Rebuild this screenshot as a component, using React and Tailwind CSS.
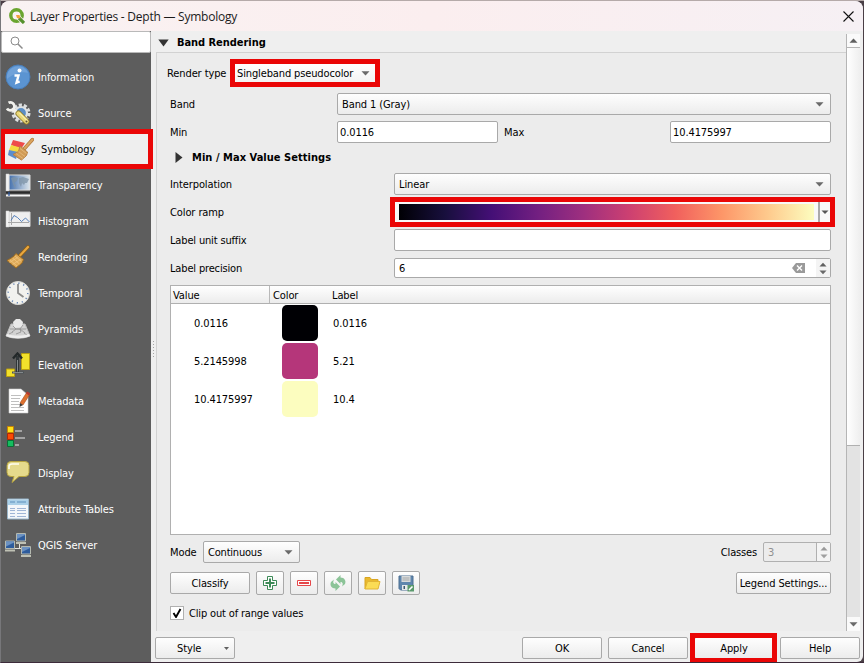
import React from 'react';

const Down = ({ className = '' }) => (
  <svg className={'shrink-0 ' + className} width="9" height="5" viewBox="0 0 9 5"><path d="M.5 0.300h8L4.500 4.500z" fill="#6a6a6a" /></svg>
);
const Up = ({ className = '' }) => (
  <svg className={'shrink-0 ' + className} width="9" height="5" viewBox="0 0 9 5"><path d="M.5 4.700h8L4.500 0.500z" fill="#606060" /></svg>
);

const field = 'flex items-center rounded-[2px] border border-[#a9a9a9] bg-white ';
const button = 'flex items-center rounded-[2px] border border-[#a9a9a9] bg-linear-to-b from-[#fefefe] to-[#ececec] ';

function Icon({ name }) {
  const p = { className: 'h-[26px] w-[26px] shrink-0', viewBox: '0 0 26 26', fill: 'none' };
  switch (name) {
    case 'info':
      return (
        <svg {...p}>
          <circle cx="13" cy="13" r="12" fill="#5b94d2" stroke="#4a7fba" />
          <path d="M2 15a11 11 0 0 1 21-6C17 7 8 10 2 15z" fill="#7facde" opacity=".6" />
          <circle cx="14.5" cy="6.5" r="2" fill="#fff" />
          <path d="M9.5 11.500h4l-2 7.200 3.200-1.200" stroke="#fff" strokeWidth="2.400" />
        </svg>
      );
    case 'source':
      return (
        <svg {...p}>
          <circle cx="16" cy="13" r="8" stroke="#dcdfe0" strokeWidth="3" strokeDasharray="3.200 1.827" />
          <circle cx="16" cy="13" r="6" fill="#5c8ec4" stroke="#dfe2e3" strokeWidth="2.200" />
          <path d="M3.500 2.800A4 4 0 1 1 2 8.500" stroke="#f1f1ed" strokeWidth="2.800" />
          <path d="M8 9l5 5" stroke="#f1f1ed" strokeWidth="3.400" />
          <path d="M13.500 13.500l8 8" stroke="#917c28" strokeWidth="6" strokeLinecap="round" />
          <path d="M13.500 13.500l8 8" stroke="#e9d877" strokeWidth="4.400" strokeLinecap="round" />
          <path d="M14.500 13l8 8" stroke="#f9f0a8" strokeWidth="1.200" />
          <circle cx="21.500" cy="21.500" r="1" fill="#5f5433" />
        </svg>
      );
    case 'symbology':
      return (
        <svg {...p}>
          <path d="M5 4l12 3-4 6L3 9z" fill="#ee4a4a" />
          <path d="M3 9l11 3-4 6L1 14z" fill="#f4d93f" />
          <path d="M1 14l9 2-2 7L0 19z" fill="#5c8ecb" />
          <path d="M24.500 3.500l-8 9" stroke="#b0783a" strokeWidth="3.400" strokeLinecap="round" />
          <path d="M24.500 3.500l-8 9" stroke="#dba560" strokeWidth="2" strokeLinecap="round" />
          <path d="M12 10l7.500 6-1 3.500-5 4.500L5 18.500l5.500-3z" fill="#d19b55" stroke="#b78142" />
          <path d="M8 17.500l7 5M10.500 15.500l6.500 5M12 12.500l6.500 5" stroke="#e6bb80" strokeWidth=".8" />
        </svg>
      );
    case 'transparency':
      return (
        <svg {...p}>
          <defs><linearGradient id="sky"><stop stopColor="#4470ad" /><stop offset="1" stopColor="#dce5eb" /></linearGradient></defs>
          <path d="M4 3h21v15H4z" fill="url(#sky)" stroke="#dcdcdc" />
          <path d="M1 2h3v17H1z" fill="#f3f3f3" stroke="#ccc" strokeWidth=".5" />
          <path d="M6 6l3-1 4 1-1 3-3 2 2 2-1 3-2-4zM14 6l4-1 6 2-2 4-2 0-1 2-2-2-1 4-2-4z" fill="#7d93a5" opacity=".75" />
          <path d="M1 19.500h24v2H1z" fill="#2b2b2b" />
          <path d="M1 22.500h24v2H1z" fill="#f4f4f4" />
          <path d="M4 20v4" stroke="#2855a0" strokeWidth="1.200" />
        </svg>
      );
    case 'histogram':
      return (
        <svg {...p}>
          <path d="M4 4h21v14.500H4z" fill="#efefef" stroke="#dcdcdc" />
          <path d="M1 3h3v16H1z" fill="#f3f3f3" stroke="#ccc" strokeWidth=".5" />
          <path d="M6.500 5v12M3 14.500h21" stroke="#a8a8a8" />
          <path d="M6 12.500l3-5 3.500 2 4 4 4-3.500 4 4" stroke="#4776b5" strokeWidth=".9" />
        </svg>
      );
    case 'rendering':
      return (
        <svg {...p}>
          <path d="M23 3l-8 8.500" stroke="#8f5e14" strokeWidth="3.600" strokeLinecap="round" />
          <path d="M23 3l-8 8.500" stroke="#e9a73f" strokeWidth="2.200" strokeLinecap="round" />
          <path d="M11 9.500l7.500 6-1.500 3.500-6 5L2 16.500l6-3.500z" fill="#dea958" stroke="#a06d20" />
          <path d="M5 16l7 6M7.500 14l7 6M10 12l6 5M4.500 18.500l8-5M7.500 20.500l8-5" stroke="#f2c984" strokeWidth=".7" />
        </svg>
      );
    case 'temporal':
      return (
        <svg {...p}>
          <circle cx="13" cy="13" r="11.500" fill="#f2f2ee" stroke="#dadad6" />
          <circle cx="13" cy="13" r="9.800" stroke="#5f7fb0" strokeWidth="1.400" strokeDasharray="1.200 3.932" />
          <path d="M13 4v9l5.500 4" stroke="#8c8c8a" strokeWidth="1.800" />
        </svg>
      );
    case 'pyramids':
      return (
        <svg {...p}>
          <path d="M6 8h14l5 12c-7 3-17 3-24 0z" fill="#d2d2d2" stroke="#bdbdbd" />
          <path d="M8 6l3-3h4l3 3-1 5-8 1z" fill="#e9e9e9" />
          <path d="M5 13h16M8 10l3 3-4 3M18 9l-3 4 5 4M11 13h4l1 3-5 2M4 18l4-2M22 19l-3-2" stroke="#8f8f8f" strokeWidth=".8" />
          <path d="M1 20c7 3 17 3 24 0l-1-2c-7 2-15 2-22 0z" fill="#eee" />
        </svg>
      );
    case 'elevation':
      return (
        <svg {...p}>
          <path d="M16.500 1.500h8v16h-8zM1.500 17h8v7.500h-8z" fill="#f2e02b" stroke="#b99e10" />
          <path d="M7 20.500h12" stroke="#4c5356" strokeWidth="2" />
          <path d="M12.500 20V4" stroke="#303638" strokeWidth="3" />
          <path d="M12.500 8v11.500M8 20.500h10" stroke="#83898b" strokeWidth="1" />
          <path d="M8 6.500l4.500-5 4.500 5" stroke="#232829" strokeWidth="2.400" />
        </svg>
      );
    case 'metadata':
      return (
        <svg {...p}>
          <path d="M4 1h12l7 6v18H4z" fill="#fff" stroke="#ccc" strokeWidth=".6" />
          <path d="M6 7.500h10M6 10.500h9M6 13.500h8M6 16.500h9M6 19.500h13M6 22.500h13" stroke="#bfbfbf" />
          <path d="M22 4l3 2-7 11-3-2z" fill="#df712f" stroke="#a74b1b" strokeWidth=".6" />
          <path d="M22 3.500l3.500 2-1.500 2-3-2z" fill="#b33a32" /><path d="M15 15l3 2-3.500 2z" fill="#3f3a36" />
        </svg>
      );
    case 'legend':
      return (
        <svg {...p}>
          <path d="M2.500 2.500h6v6h-6z" fill="#ffe11a" stroke="#c78305" />
          <path d="M2.500 9.500h6v6h-6z" fill="#fb4a05" stroke="#ae2907" />
          <path d="M2.500 16.500h6v6h-6z" fill="#15bd5f" stroke="#0a6f35" />
          <path d="M10 7h7M10 14h10M10 21h4" stroke="#a3a3a3" strokeWidth="2" />
        </svg>
      );
    case 'display':
      return (
        <svg {...p}>
          <path d="M6 1.500h14q4 0 4 4v7q0 4-4 4h-6L7 22.500l2-6H6q-4 0-4-4v-7q0-4 4-4z" fill="#e5da8c" stroke="#b6a440" />
          <path d="M4 9V6.500Q4 4 7 4h7" stroke="#fffef0" strokeWidth="1.600" />
        </svg>
      );
    case 'table':
      return (
        <svg {...p}>
          <path d="M2.500 3h21v20h-21z" fill="#f3f7fa" stroke="#98b4c8" />
          <path d="M3 3.500h20V9H3z" fill="#aad0e8" />
          <path d="M5 6h5M12 6h9" stroke="#5d8fbb" strokeWidth="1.200" />
          <path d="M5 12.500h5M5 14.500h5M5 17.500h5M5 20.500h5M12 12.500h9M12 14.500h9M12 17.500h9M12 20.500h9" stroke="#9fb6d6" strokeWidth="1" />
        </svg>
      );
    default:
      return (
        <svg {...p}>
          <path d="M14.500 11v6M9 16.500h10" stroke="#e5e5df" />
          {[[11, 1], [0, 8.500], [16, 14]].map(([x, y]) => (
            <g key={x} transform={`translate(${x} ${y})`}>
              <path d="M.5.500h9v7.500h-9z" fill="#2e5c9c" stroke="#b4b9b0" />
              <path d="M1 6l8-4V1H1z" fill="#6c92c2" />
              <path d="M0 9h10v2H0z" fill="#bfc1b4" />
            </g>
          ))}
        </svg>
      );
  }
}

const NAV = [
  ['info', 'Information'], ['source', 'Source'], ['symbology', 'Symbology'], ['transparency', 'Transparency'],
  ['histogram', 'Histogram'], ['rendering', 'Rendering'], ['temporal', 'Temporal'], ['pyramids', 'Pyramids'],
  ['elevation', 'Elevation'], ['metadata', 'Metadata'], ['legend', 'Legend'], ['display', 'Display'],
  ['table', 'Attribute Tables'], ['server', 'QGIS Server'],
];

function Sidebar() {
  return (
    <div className="flex w-[150px] shrink-0 flex-col bg-[#5d5d5d]">
      <div className="flex h-[22px] shrink-0 items-center rounded-[2px] border border-[#b9b9b9] bg-white pl-2">
        <svg width="13" height="13" viewBox="0 0 13 13" fill="none" stroke="#8b8b8b"><circle cx="5" cy="5" r="4" /><path d="M8 8l4.500 4.500" strokeWidth="1.500" /></svg>
      </div>
      <div className="flex flex-col pt-[6px]">
        {NAV.map(([icon, label]) =>
          icon === 'symbology' ? (
            <div key={icon} className="relative flex h-9 items-center bg-[#eeeeee] pl-[7px]">
              <Icon name={icon} />
              <span className="ml-[7px] text-black">{label}</span>
              <div className="absolute -top-[2px] -left-[1px] h-[40px] w-[153px] border-5 border-[#ea0606]" />
            </div>
          ) : (
            <div key={icon} className="flex h-9 items-center pl-[4px]">
              <Icon name={icon} />
              <span className="ml-[7px] text-white">{label}</span>
            </div>
          )
        )}
      </div>
    </div>
  );
}

const ROWS = [
  ['0.0116', 'bg-[#000004]', '0.0116'],
  ['5.2145998', 'bg-[#b5367a]', '5.21'],
  ['10.4175997', 'bg-[#fcfdbf]', '10.4'],
];

function ColorTable() {
  return (
    <div className="mt-[7px] h-[250px] w-[661px] border border-[#b0b0b0] bg-white">
      <div className="flex h-[18px] items-center border-b border-[#b0b0b0] bg-linear-to-b from-white to-[#ececec]">
        <div className="flex h-full w-[99px] items-center border-r border-[#b9b9b9] pl-[2px]"><span>Value</span></div>
        <div className="flex h-full w-[59px] items-center pl-[3px]"><span>Color</span></div>
        <div className="flex pl-[3px]"><span>Label</span></div>
      </div>
      {ROWS.map(([v, c, l]) => (
        <div key={v} className="flex h-[38px] items-center">
          <div className="flex w-[111px] pl-[23px]"><span>{v}</span></div>
          <div className={'h-9 w-9 rounded-[5px] ' + c} />
          <div className="flex pl-[15px]"><span>{l}</span></div>
        </div>
      ))}
    </div>
  );
}

function Tool({ children }) {
  return <div className={button + 'h-6 w-7 justify-center'}><svg width="18" height="18" viewBox="0 0 18 18" fill="none">{children}</svg></div>;
}

function Group() {
  return (
    <div className="ml-[5px] flex h-[579px] flex-col border-t border-l border-[#d2d2d2] bg-[#ececec] pt-[6px] pl-[13px]">
      <div className="flex h-7 items-center">
        <span className="-ml-[3px] w-[63px] whitespace-nowrap">Render type</span>
        <div className="flex h-7 w-[150px] items-center border-5 border-[#ea0606] bg-linear-to-b from-white to-[#f3f3f3] pl-[2px]">
          <span className="w-[124px] whitespace-nowrap tracking-[-0.13px]">Singleband pseudocolor</span><Down />
        </div>
      </div>
      <div className="mt-[6px] flex h-[22px] items-center">
        <span className="w-[167px]">Band</span>
        <div className={button + 'h-[22px] w-[494px] justify-between pr-[6px] pl-1'}><span>Band 1 (Gray)</span><Down /></div>
      </div>
      <div className="mt-[6px] flex h-[22px] items-center">
        <span className="w-[167px]">Min</span>
        <div className={field + 'h-[22px] w-[161px] pl-[2px]'}><span>0.0116</span></div>
        <span className="ml-[6px] w-[166px]">Max</span>
        <div className={field + 'h-[22px] w-[161px] pl-[2px]'}><span>10.4175997</span></div>
      </div>
      <div className="mt-[3px] flex h-[22px] items-center pl-[5px]">
        <svg width="8" height="11" viewBox="0 0 8 11"><path d="M.5 0v11L7.500 5.500z" fill="#333" /></svg>
        <span className="ml-[9px] font-bold tracking-[0.04px]">Min / Max Value Settings</span>
      </div>
      <div className="mt-[5px] flex h-[22px] items-center">
        <span className="w-[224px]">Interpolation</span>
        <div className={button + 'h-[22px] w-[437px] justify-between pr-[6px] pl-1'}><span>Linear</span><Down /></div>
      </div>
      <div className="mt-[6px] flex h-[22px] items-center">
        <span className="w-[220px]">Color ramp</span>
        <div className="-my-1 flex h-[30px] w-[445px] shrink-0 items-center border-5 border-[#ea0606] bg-[#f8f8f8] pl-1">
          <div className="h-4 w-[415px] bg-[linear-gradient(to_right,#000004,#180f3d,#440f76,#721f81,#9e2f7f,#cd4071,#f1605d,#fd9668,#feca8d,#fcfdbf)]" />
          <div className="ml-1 h-full w-[2px] bg-[#aaaaaa]" />
          <svg className="ml-[1px]" width="8" height="5" viewBox="0 0 8 5"><path d="M.5.500h7L4 4z" fill="#555" /></svg>
        </div>
      </div>
      <div className="mt-[6px] flex h-[22px] items-center">
        <span className="w-[224px] tracking-[-0.16px]">Label unit suffix</span>
        <div className={field + 'h-[22px] w-[437px]'} />
      </div>
      <div className="mt-[7px] flex h-5 items-center">
        <span className="w-[224px] tracking-[-0.16px]">Label precision</span>
        <div className={field + 'h-5 w-[437px] pl-1'}>
          <span className="grow">6</span>
          <svg width="13" height="10" viewBox="0 0 13 10"><path d="M4 0h9v10H4L0 5z" fill="#9a9a9a" /><path d="M5 2.500l5 5m0-5l-5 5" stroke="#fff" strokeWidth="1.400" /></svg>
          <div className="ml-[11px] flex h-full w-[14px] flex-col items-center justify-center gap-[3px] bg-[#f4f4f4]"><Up className="w-[8px]" /><Down className="w-[8px]" /></div>
        </div>
      </div>
      <ColorTable />
      <div className="mt-[6px] flex h-[22px] w-[661px] items-center">
        <span className="w-[33px]">Mode</span>
        <div className={button + 'h-[22px] w-[97px] justify-between pr-[6px] pl-1'}><span className="tracking-[-0.2px]">Continuous</span><Down /></div>
        <span className="ml-auto tracking-[-0.16px]">Classes</span>
        <div className="ml-[6px] flex h-5 w-[68px] items-center rounded-[2px] border border-[#b0b0b0] pl-1 text-[#909090]">
          <span className="grow">3</span>
          <div className="flex h-full w-[14px] flex-col items-center justify-center gap-[3px] border-l border-[#b0b0b0] bg-[#f4f4f4]"><Up className="w-[8px] opacity-60" /><Down className="w-[8px] opacity-60" /></div>
        </div>
      </div>
      <div className="mt-[8px] flex h-6 w-[661px] items-center gap-[6px]">
        <div className={button + 'h-[22px] w-[80px] justify-center'}><span>Classify</span></div>
        <Tool>
          <path d="M6.500 2.500h5v4h4v5h-4v4h-5v-4h-4v-5h4z" fill="#fff" stroke="#3d8a57" />
          <path d="M9 4.500v9M4.500 9h9" stroke="#3d8a57" strokeWidth="2" />
        </Tool>
        <Tool><path d="M2.500 6.500h13v5h-13z" fill="#fff" stroke="#e6484b" /><path d="M4 9h10" stroke="#e6484b" strokeWidth="2" /></Tool>
        <Tool>
          <path d="M7 5.500L11.500 1v2.500c4 0 6 3.500 4.500 6.500l-3 2.500c1.500-3 .5-4.500-1.500-4.500V10z" fill="#8cc498" />
          <path d="M11 12.500L6.500 17v-2.500c-4 0-6-3.500-4.500-6.500l3-2.500c-1.500 3-.5 4.500 1.500 4.500V8z" fill="#8cc498" />
        </Tool>
        <Tool><path d="M2 15V3.500h5l1.500 2h6.500v3" fill="#e9b92f" stroke="#d9a520" /><path d="M4.500 7.500H17l-2 7.500H2z" fill="#fbdc55" stroke="#e2b535" /></Tool>
        <Tool>
          <path d="M2 2h14v14H3.500L2 14.500z" fill="#5f86ad" stroke="#4c6e91" /><path d="M4.500 2h9v6h-9z" fill="#d8dbdc" /><path d="M5.500 4h7M5.500 6h7" stroke="#a4a7a8" />
          <path d="M5 11h6v5H5z" fill="#e6e9ea" /><path d="M6.500 12h1.500v3H6.500z" fill="#3e5872" /><path d="M10.500 11h6.500v6.500h-6.500z" fill="#5a9a6c" /><path d="M12 16l3.500-3.500" stroke="#fff" strokeWidth="1.600" />
        </Tool>
        <div className={button + 'ml-auto h-[22px] w-[95px] justify-center whitespace-nowrap'}><span>Legend Settings...</span></div>
      </div>
      <div className="mt-[8px] flex h-5 items-center">
        <div className="flex h-[14px] w-[14px] items-center justify-center border border-[#b0b0b0] bg-white">
          <svg width="10" height="10" viewBox="0 0 10 10" fill="none"><path d="M1.500 5l2.500 4L8.500 1" stroke="#000" strokeWidth="1.900" /></svg>
        </div>
        <span className="ml-[5px] tracking-[-0.16px]">Clip out of range values</span>
      </div>
    </div>
  );
}

export default function App() {
  return (
    <div className="h-[663px] w-[864px] overflow-hidden bg-[#4a3f46] font-['DejaVu_Sans_Condensed','DejaVu_Sans',sans-serif] text-[11px] leading-[14px] tracking-[-0.1px] text-black [&_span]:translate-y-px">
      <div className="flex h-full flex-col border-t border-b border-l border-t-[#b5aaa9] border-b-[#3c2b3a] border-l-[#77777a]">
        <div className="flex h-full w-[862px] flex-col overflow-hidden rounded-t-lg rounded-br-md bg-[#efefef]">
          <div className="flex h-[30px] shrink-0 items-center bg-linear-to-r from-[#f9f2f2] via-[#fbeeef] to-[#f6f0f4] pr-[9px] pl-2">
            <svg width="16" height="16" viewBox="0 0 16 16" fill="none">
              <circle cx="7.500" cy="7.500" r="5.700" stroke="#6aa52f" strokeWidth="3.400" />
              <path d="M8 8l7 7" stroke="#faf1f1" strokeWidth="4.600" /><path d="M10 10l5 5" stroke="#54902c" strokeWidth="3.200" /><path d="M7 7h3.500l1 3.500-3.500-.5z" fill="#efa23a" />
            </svg>
            <span className="ml-[5px] grow font-['Open_Sans','Noto_Sans',sans-serif] text-[12px] tracking-[-0.24px] whitespace-nowrap text-[#1b1b1b]">Layer Properties - Depth — Symbology</span>
            <svg width="11" height="11" viewBox="0 0 11 11"><path d="M.5.500l10 10m0-10l-10 10" stroke="#111" strokeWidth="1.100" /></svg>
          </div>
          <div className="flex min-h-0 grow">
            <Sidebar />
            <div className="flex grow flex-col">
              <div className="flex h-[600px]">
                <div className="w-[695px]">
                  <div className="flex h-[21px] items-center pl-[7px]">
                    <svg className="translate-y-px" width="11" height="8" viewBox="0 0 11 8"><path d="M.3 .5h10.400L5.500 7.500z" fill="#333" /></svg>
                    <span className="ml-[8px] font-bold tracking-[-0.05px]">Band Rendering</span>
                  </div>
                  <div className="flex">
                    <div className="-mr-[5px] flex h-[579px] w-[5px] flex-col items-center gap-[2px] pt-[289px]">
                      {[0, 1, 2, 3, 4, 5].map((i) => <div key={i} className="h-px w-px shrink-0 bg-[#a5a5a5]" />)}
                    </div>
                    <div className="grow"><Group /></div>
                  </div>
                </div>
                <div className="mt-[3px] flex w-[14px] flex-col border-l border-[#b5b5b5] bg-[#e3e3e3]">
                  <div className="flex h-[14px] items-center justify-center border-b border-[#b5b5b5] bg-[#fafafa]"><Up /></div>
                  <div className="h-[398px] border-b border-[#b0b0b0] bg-linear-to-r from-white to-[#efefef]" />
                  <div className="grow" />
                  <div className="flex h-[14px] items-center justify-center bg-[#fafafa]"><Down /></div>
                </div>
              </div>
              <div className="flex pt-[6px] pl-1">
                <div className={button + 'h-[22px] w-[80px] pr-[5px] pl-[21px]'}><span className="grow">Style</span><svg width="5" height="3" viewBox="0 0 5 3"><path d="M0 0h5L2.500 3z" fill="#606060" /></svg></div>
                <div className="ml-[287px] flex gap-[6px]">
                  <div className={button + 'h-[22px] w-[80px] justify-center'}><span>OK</span></div>
                  <div className={button + 'h-[22px] w-[80px] justify-center'}><span>Cancel</span></div>
                  <div className={button + 'relative h-[22px] w-[80px] justify-center'}><span>Apply</span><div className="absolute -top-[5px] -left-[5px] h-[30px] w-[87px] border-5 border-[#ea0606]" /></div>
                  <div className={button + 'h-[22px] w-[80px] justify-center'}><span>Help</span></div>
                </div>
              </div>
            </div>
          </div>
        </div>
      </div>
    </div>
  );
}
